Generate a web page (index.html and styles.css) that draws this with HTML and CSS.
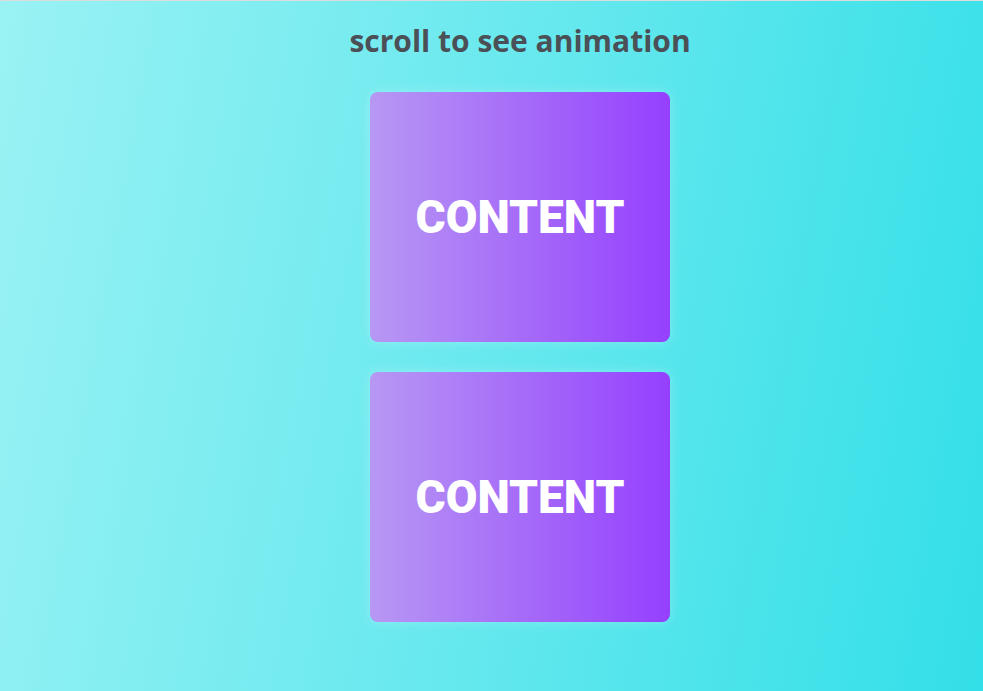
FILE: index.html
```html
<!DOCTYPE html>
<html>
<head>
<meta charset="utf-8">
<link rel="stylesheet" href="styles.css">
</head>
<body>
<div class="page">
  <h1 class="title">scroll to see animation</h1>
  <div class="box">CONTENT</div>
  <div class="box">CONTENT</div>
</div>
</body>
</html>
```
FILE: styles.css
```css
html, body {
  margin: 0;
  padding: 0;
  height: 100%;
}
body {
  border-top: 1px solid #dcdcdc;
  box-sizing: border-box;
  background: linear-gradient(100deg, #9af2f4 0%, #33dfe8 100%);
  overflow: hidden;
}
.page {
  display: flex;
  flex-direction: column;
  align-items: center;
  gap: 30px;
  padding-left: 57px;
}
.title {
  margin: 21px 0 0;
  height: 40px;
  font-family: "Open Sans", sans-serif;
  font-weight: 700;
  font-size: 30px;
  line-height: 38px;
  color: #4b5057;
}
.box {
  width: 300px;
  height: 250px;
  border-radius: 8px;
  background: linear-gradient(90deg, #b798f3 0%, #9540fe 100%);
  box-shadow: 0 0 12px rgba(255, 255, 255, 0.25);
  display: flex;
  align-items: center;
  justify-content: center;
  color: #fff;
  font-family: Roboto, sans-serif;
  font-weight: 900;
  font-size: 46px;
  letter-spacing: 0;
}
```
